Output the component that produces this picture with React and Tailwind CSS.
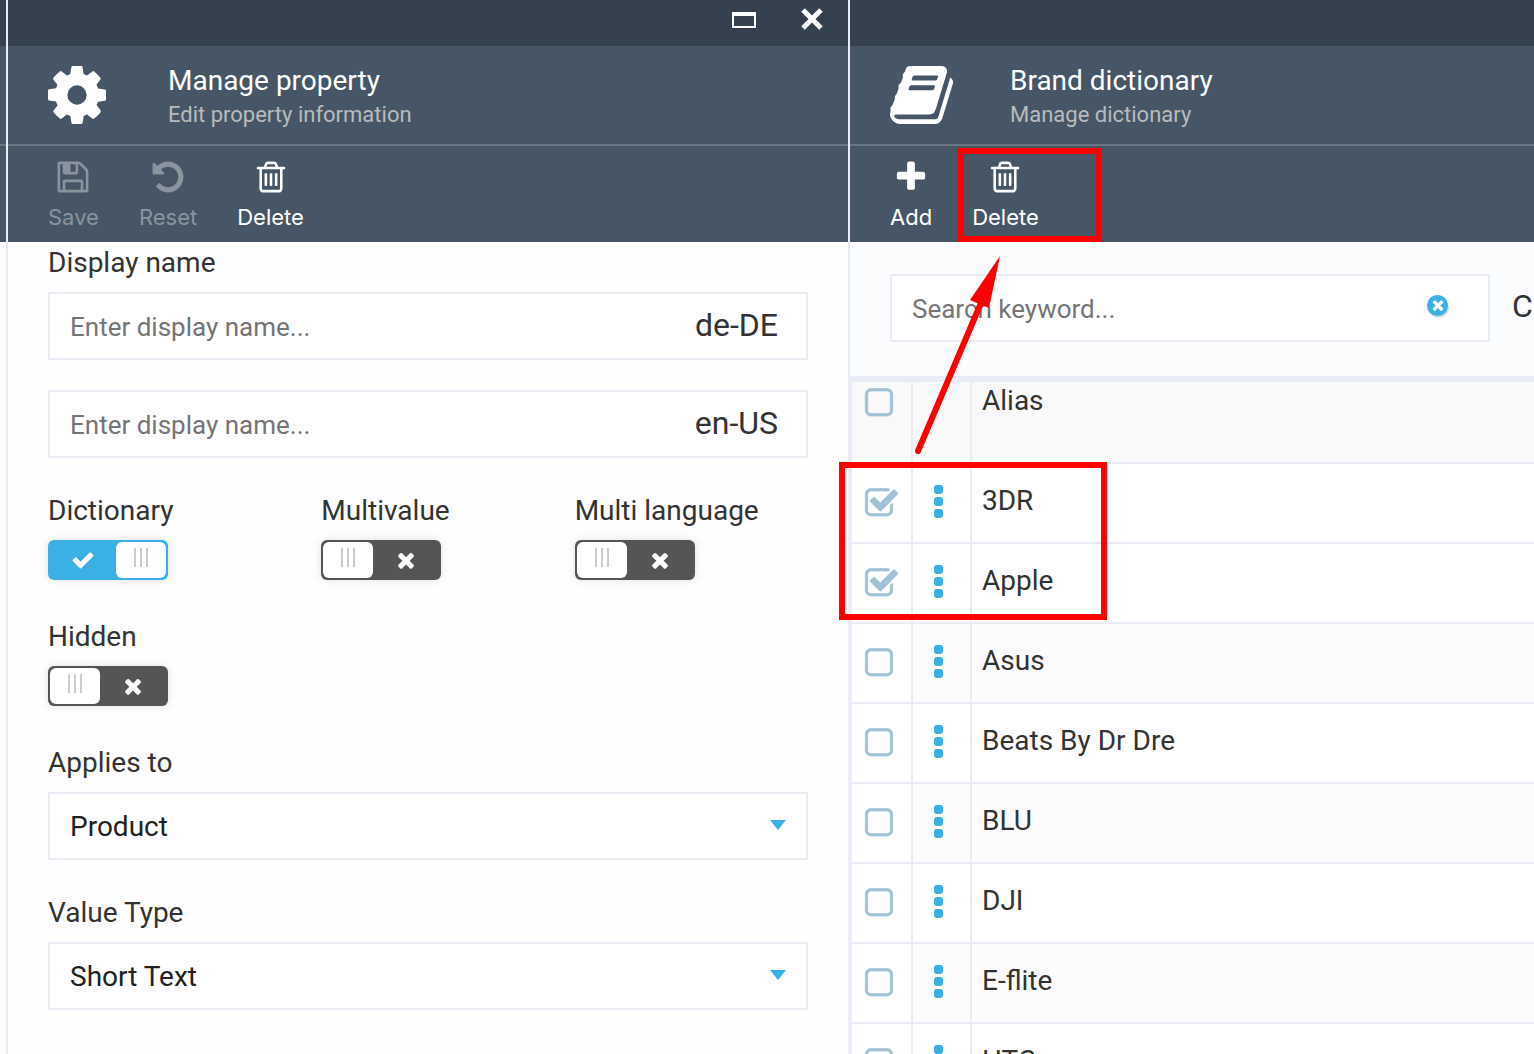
import React from "react";

const ICONS = {
  cog: {
    box: "128 0 1536 1792",
    d: "M1152 896q0-106-75-181t-181-75-181 75-75 181 75 181 181 75 181-75 75-181zm512-109v222q0 12-8 23t-20 13l-185 28q-19 54-39 91 35 50 107 138 10 12 10 25t-9 23q-27 37-99 108t-94 71q-12 0-26-9l-138-108q-44 23-91 38-16 136-29 186-7 28-36 28h-222q-14 0-24.5-8.5t-11.5-21.5l-28-184q-49-16-90-37l-141 107q-10 9-25 9-14 0-25-11-126-114-165-168-7-10-7-23 0-12 8-23 15-21 51-66.5t54-70.5q-27-50-41-99l-183-27q-13-2-21-12.5t-8-23.5v-222q0-12 8-23t19-13l186-28q14-46 39-92-40-57-107-138-10-12-10-24 0-10 9-23 26-36 98.5-107.5t94.5-71.5q13 0 26 10l138 107q44-23 91-38 16-136 29-186 7-28 36-28h222q14 0 24.5 8.5t11.5 21.5l28 184q49 16 90 37l142-107q9-9 24-9 13 0 25 10 129 119 165 170 7 8 7 22 0 12-8 23-15 21-51 66.5t-54 70.5q26 50 41 98l183 28q13 2 21 12.5t8 23.5z",
  },
  save: {
    box: "0 0 1792 1792",
    d: "M512 1536h768v-384h-768v384zm896 0h128v-896q0-14-10-38.5t-20-34.5l-281-281q-10-10-34-20t-39-10v416q0 40-28 68t-68 28h-576q-40 0-68-28t-28-68v-416h-128v1280h128v-416q0-40 28-68t68-28h832q40 0 68 28t28 68v416zm-384-928v-320q0-13-9.5-22.5t-22.5-9.5h-192q-13 0-22.5 9.5t-9.5 22.5v320q0 13 9.5 22.5t22.5 9.5h192q13 0 22.5-9.5t9.5-22.5zm640 32v928q0 40-28 68t-68 28h-1344q-40 0-68-28t-28-68v-1344q0-40 28-68t68-28h928q40 0 88 20t76 48l280 280q28 28 48 76t20 88z",
  },
  undo: {
    box: "0 0 1792 1792",
    d: "M1664 896q0 156-61 298t-164 245-245 164-298 61q-172 0-327-72.5t-264-204.5q-7-10-6.5-22.5t8.5-20.5l137-138q10-9 25-9 16 2 23 12 73 95 179 147t225 52q104 0 198.5-40.5t163.5-109.5 109.5-163.5 40.5-198.5-40.5-198.5-109.5-163.5-163.5-109.5-198.5-40.5q-98 0-188 35.5t-160 101.5l137 138q31 30 14 69-17 40-59 40h-448q-26 0-45-19t-19-45v-448q0-42 40-59 39-17 69 14l130 129q107-101 244.5-156.5t284.5-55.5q156 0 298 61t245 164 164 245 61 298z",
  },
  trash: {
    box: "0 0 1792 1792",
    d: "M704 736v576q0 14-9 23t-23 9h-64q-14 0-23-9t-9-23v-576q0-14 9-23t23-9h64q14 0 23 9t9 23zm256 0v576q0 14-9 23t-23 9h-64q-14 0-23-9t-9-23v-576q0-14 9-23t23-9h64q14 0 23 9t9 23zm256 0v576q0 14-9 23t-23 9h-64q-14 0-23-9t-9-23v-576q0-14 9-23t23-9h64q14 0 23 9t9 23zm128 724v-948h-896v948q0 22 7 40.5t14.5 27 10.5 8.5h832q3 0 10.5-8.5t14.5-27 7-40.5zm-672-1076h448l-48-117q-7-9-17-11h-317q-10 2-17 11zm928 32v64q0 14-9 23t-23 9h-96v948q0 83-47 143.5t-113 60.5h-832q-66 0-113-58.5t-47-141.5v-952h-96q-14 0-23-9t-9-23v-64q0-14 9-23t23-9h309l70-167q15-37 54-63t79-26h320q40 0 79 26t54 63l70 167h309q14 0 23 9t9 23z",
  },
  plus: {
    box: "0 0 1792 1792",
    d: "M1600 736v192q0 40-28 68t-68 28h-416v416q0 40-28 68t-68 28h-192q-40 0-68-28t-28-68v-416h-416q-40 0-68-28t-28-68v-192q0-40 28-68t68-28h416v-416q0-40 28-68t68-28h192q40 0 68 28t28 68v416h416q40 0 68 28t28 68z",
  },
  book: {
    box: "64 0 1664 1792",
    d: "M1703 478q40 57 18 129l-275 906q-19 64-76.5 107.5t-122.5 43.5h-923q-77 0-148.5-53.5t-99.5-131.5q-24-67-2-127 0-4 3-27t4-37q1-8-3-21.5t-3-19.5q2-11 8-21t16.5-23.5 16.5-23.5q23-38 45-91.5t30-91.5q3-10 .5-30t-.5-28q3-11 17-28t17-23q21-36 42-92t25-90q1-9-2.5-32t.5-28q4-13 22-30.5t22-22.5q19-26 42.5-84.5t27.5-96.5q1-8-3-25.5t-2-26.5q2-8 9-18t18-23 17-21q8-12 16.5-30.5t15-35 16-36 19.5-32 26.5-23.5 36-11.5 47.5 5.5l-1 3q38-9 51-9h761q74 0 114 56t18 130l-274 906q-36 119-71.5 153.5t-128.5 34.5h-869q-27 0-38 15-11 16-1 43 24 70 144 70h923q29 0 56-15.5t35-41.5l300-987q7-22 5-57 38 15 59 43zm-1064 2q-4 13 2 22.5t20 9.5h608q13 0 25.5-9.5t16.5-22.5l21-64q4-13-2-22.5t-20-9.5h-608q-13 0-25.5 9.5t-16.5 22.5zm-83 256q-4 13 2 22.5t20 9.5h608q13 0 25.5-9.5t16.5-22.5l21-64q4-13-2-22.5t-20-9.5h-608q-13 0-25.5 9.5t-16.5 22.5z",
  },
  checked: {
    box: "64 0 1664 1792",
    d: "M1472 930v318q0 119-84.5 203.5t-203.5 84.5h-832q-119 0-203.5-84.5t-84.5-203.5v-832q0-119 84.5-203.5t203.5-84.5h832q63 0 117 25 15 7 18 23 3 17-9 29l-49 49q-10 10-23 10-3 0-9-2-23-6-45-6h-832q-66 0-113 47t-47 113v832q0 66 47 113t113 47h832q66 0 113-47t47-113v-254q0-13 9-22l64-64q10-10 23-10 6 0 12 3 20 8 20 29zm231-489l-814 814q-24 24-57 24t-57-24l-430-430q-24-24-24-57t24-57l110-110q24-24 57-24t57 24l263 263 647-647q24-24 57-24t57 24l110 110q24 24 24 57t-24 57z",
  },
  unchecked: {
    box: "192 0 1664 1792",
    d: "M1312 256h-832q-66 0-113 47t-47 113v832q0 66 47 113t113 47h832q66 0 113-47t47-113v-832q0-66-47-113t-113-47zm288 160v832q0 119-84.5 203.5t-203.5 84.5h-832q-119 0-203.5-84.5t-84.5-203.5v-832q0-119 84.5-203.5t203.5-84.5h832q119 0 203.5 84.5t84.5 203.5z",
  },
  times: {
    box: "0 0 1792 1792",
    d: "M1490 1322q0 40-28 68l-136 136q-28 28-68 28t-68-28l-294-294-294 294q-28 28-68 28t-68-28l-136-136q-28-28-28-68t28-68l294-294-294-294q-28-28-28-68t28-68l136-136q28-28 68-28t68 28l294 294 294-294q28-28 68-28t68 28l136 136q28 28 28 68t-28 68l-294 294 294 294q28 28 28 68z",
  },
  check: {
    box: "0 0 1792 1792",
    d: "M1671 566q0 40-28 68l-724 724-136 136q-28 28-68 28t-68-28l-136-136-362-362q-28-28-28-68t28-68l136-136q28-28 68-28t68 28l294 295 656-657q28-28 68-28t68 28l136 136q28 28 28 68z",
  },
};

function Icon({ name, className }) {
  return (
    <svg viewBox={ICONS[name].box} className={className} fill="currentColor" aria-hidden="true">
      <path d={ICONS[name].d} />
    </svg>
  );
}

function ToolButton({ icon, label, disabled }) {
  return (
    <button
      type="button"
      disabled={disabled}
      className="flex flex-col items-center gap-1 font-[Inter,sans-serif] text-[22px] leading-9 text-white disabled:text-[#8a949e]"
    >
      <Icon name={icon} className="size-9" />
      <span>{label}</span>
    </button>
  );
}

function BladeHeader({ icon, iconClass, title, subtitle, windowButtons, children }) {
  return (
    <header className="bg-[#465666] text-white">
      <div className="flex h-[46px] items-start justify-end gap-11 bg-[#35414e] pt-2 pr-6">
        {windowButtons}
      </div>
      <div className="flex h-[100px] items-center border-b-2 border-[#6a7783] pl-10">
        <div className="w-[120px]">
          <Icon name={icon} className={iconClass} />
        </div>
        <div className="pt-1">
          <h1 className="text-[28px] leading-9">{title}</h1>
          <p className="text-[22px] leading-8 text-[#b9bbbd]">{subtitle}</p>
        </div>
      </div>
      <div className="flex h-24 items-start gap-10 pt-[13px] pl-10">{children}</div>
    </header>
  );
}

function NameInput({ lang }) {
  return (
    <div className="flex h-[68px] items-center border-2 border-[#e9ecf3] bg-white pt-0.5 pr-7 pl-5">
      <input
        type="text"
        aria-label={`Display name ${lang}`}
        placeholder="Enter display name..."
        className="min-w-0 flex-1 text-[26px] outline-none placeholder:text-[#757575]"
      />
      <span className="pb-1 text-[32px] leading-10">{lang}</span>
    </div>
  );
}

function Toggle({ label, defaultChecked }) {
  return (
    <label className="flex flex-col items-start gap-3 text-[28px] leading-[34px]">
      {label}
      <input type="checkbox" defaultChecked={defaultChecked} className="peer sr-only" />
      <span className="flex h-10 w-[120px] items-center rounded-md bg-[#555] p-0.5 text-white shadow-[0_0_8px_rgba(0,0,0,0.12)] peer-checked:flex-row-reverse peer-checked:bg-[#3bb0e6]">
        <span className="flex h-9 w-[50px] items-start justify-center gap-1 rounded-md bg-white pt-1.5">
          <i className="h-[19px] w-0.5 bg-[#ccc]" />
          <i className="h-[19px] w-0.5 bg-[#ccc]" />
          <i className="h-[19px] w-0.5 bg-[#ccc]" />
        </span>
        <span className="flex flex-1 justify-center">
          <Icon name={defaultChecked ? "check" : "times"} className="size-6" />
        </span>
      </span>
    </label>
  );
}

function SelectField({ id, label, value }) {
  return (
    <div className="flex flex-col gap-3">
      <label htmlFor={id} className="text-[28px] leading-[34px]">
        {label}
      </label>
      <div className="relative">
        <select
          id={id}
          className="h-[68px] w-full appearance-none border-2 border-[#e9ecf3] bg-white px-5 pt-0.5 text-[28px] text-[#222] outline-none"
        >
          <option>{value}</option>
        </select>
        <svg
          viewBox="0 0 16 10"
          className="pointer-events-none absolute top-7 right-[22px] h-2.5 w-4 fill-[#3bb0e6]"
          aria-hidden="true"
        >
          <path d="M0 0h16L8 10z" />
        </svg>
      </div>
    </div>
  );
}

function RowCheckbox({ label, defaultChecked }) {
  return (
    <label className="block text-[#a0c1d6]">
      <input type="checkbox" aria-label={label} defaultChecked={defaultChecked} className="sr-only" />
      <Icon
        name={defaultChecked ? "checked" : "unchecked"}
        className="h-[35px] w-[33px] overflow-visible stroke-current stroke-[36]"
      />
    </label>
  );
}

const ROWS = [
  { alias: "3DR", selected: true },
  { alias: "Apple", selected: true },
  { alias: "Asus" },
  { alias: "Beats By Dr Dre" },
  { alias: "BLU" },
  { alias: "DJI" },
  { alias: "E-flite" },
  { alias: "HTC" },
];

function DictionaryTable() {
  return (
    <table className="w-full border-separate border-spacing-0 border-l-2 border-[#e9ecf4] bg-white text-left text-[28px] leading-[38px]">
      <thead>
        <tr className="h-[82px] bg-[#f9f9f9] align-top">
          <th className="w-[61px] border-r-2 border-b-2 border-[#e9ecf4] pt-1 pl-[13px]">
            <RowCheckbox label="Select all" />
          </th>
          <th className="w-[59px] border-r-2 border-b-2 border-[#e9ecf4]" />
          <th className="border-b-2 border-[#e9ecf4] pl-2.5 font-normal">Alias</th>
        </tr>
      </thead>
      <tbody>
        {ROWS.map((row) => (
          <tr key={row.alias} className="h-20 align-top nth-[n+3]:odd:bg-[#fcfcfc]">
            <td className="border-r-2 border-b-2 border-[#e9ecf4] bg-white pt-[22px] pl-[13px]">
              <RowCheckbox label={`Select ${row.alias}`} defaultChecked={row.selected} />
            </td>
            <td className="border-r-2 border-b-2 border-[#e9ecf4] pt-[21px] pl-[21px]">
              <button
                type="button"
                aria-label={`Actions for ${row.alias}`}
                className="flex flex-col gap-[3px]"
              >
                <i className="size-[9px] rounded-[3px] bg-[#3bb0e6]" />
                <i className="size-[9px] rounded-[3px] bg-[#3bb0e6]" />
                <i className="size-[9px] rounded-[3px] bg-[#3bb0e6]" />
              </button>
            </td>
            <td className="border-b-2 border-[#e9ecf4] pt-[18px] pl-2.5">{row.alias}</td>
          </tr>
        ))}
      </tbody>
    </table>
  );
}

export default function App() {
  return (
    <div className="relative grid h-screen grid-cols-[8px_842fr_684fr] overflow-hidden bg-white font-[Roboto,sans-serif] text-[#333]">
      <div className="border-r-2 border-[#e9ecf3] bg-[#fbfcfe]">
        <div className="h-[46px] bg-[#35414e]" />
        <div className="h-[100px] border-b-2 border-[#6a7783] bg-[#465666]" />
        <div className="h-24 bg-[#465666]" />
      </div>

      <section className="min-w-0 border-r-2 border-[#e9ecf4] bg-[#fefefe]">
        <BladeHeader
          icon="cog"
          iconClass="h-[68px] w-[58px]"
          title="Manage property"
          subtitle="Edit property information"
          windowButtons={
            <>
              <button type="button" aria-label="Maximize" className="py-1">
                <span className="block h-4 w-6 border-2 border-t-4 border-white" />
              </button>
              <button type="button" aria-label="Close">
                <svg viewBox="0 0 24 24" className="size-6" aria-hidden="true">
                  <path d="M3 2l18 18M21 2L3 20" stroke="white" strokeWidth="5" />
                </svg>
              </button>
            </>
          }
        >
          <ToolButton icon="save" label="Save" disabled />
          <ToolButton icon="undo" label="Reset" disabled />
          <ToolButton icon="trash" label="Delete" />
        </BladeHeader>

        <form className="flex flex-col gap-9 px-10 pt-1">
          <div>
            <h2 className="mb-3 text-[28px] leading-[34px]">Display name</h2>
            <div className="flex flex-col gap-[30px]">
              <NameInput lang="de-DE" />
              <NameInput lang="en-US" />
            </div>
          </div>
          <div className="flex flex-col gap-10 pb-1">
            <div className="grid grid-cols-3">
              <Toggle label="Dictionary" defaultChecked />
              <div className="pl-5">
                <Toggle label="Multivalue" />
              </div>
              <div className="pl-5">
                <Toggle label="Multi language" />
              </div>
            </div>
            <Toggle label="Hidden" />
          </div>
          <SelectField id="applies-to" label="Applies to" value="Product" />
          <SelectField id="value-type" label="Value Type" value="Short Text" />
        </form>
      </section>

      <section className="min-w-0 bg-[#fbfcfe]">
        <BladeHeader
          icon="book"
          iconClass="h-[68px] w-[63px]"
          title="Brand dictionary"
          subtitle="Manage dictionary"
        >
          <ToolButton icon="plus" label="Add" />
          <ToolButton icon="trash" label="Delete" />
        </BladeHeader>

        <div className="flex items-center border-b-6 border-[#e9ecf4] pt-8 pb-[34px] pl-10">
          <div className="flex h-[68px] min-w-0 flex-1 items-center border-2 border-[#e9ecf4] bg-white pt-0.5 pr-10 pl-5">
            <input
              type="text"
              aria-label="Search keyword"
              placeholder="Search keyword..."
              className="min-w-0 flex-1 text-[26px] outline-none placeholder:text-[#757575]"
            />
            <button
              type="button"
              aria-label="Clear search"
              className="mb-2 flex size-[21px] items-center justify-center rounded-full bg-[#3bb0e6] text-white shadow-[1px_2px_1px_rgba(0,0,0,0.15)]"
            >
              <Icon name="times" className="size-4" />
            </button>
          </div>
          <span className="w-11 pb-1 pl-[22px] text-[32px] leading-10">C</span>
        </div>
        <DictionaryTable />
      </section>

      <div className="pointer-events-none absolute top-[148px] left-[958px] h-[94px] w-36 border-6 border-[#f00]" />
      <div className="pointer-events-none absolute top-[462px] left-[839px] h-[158px] w-[268px] border-6 border-[#f00]" />
      <svg
        viewBox="910 250 100 210"
        className="pointer-events-none absolute top-[250px] left-[910px] h-[210px] w-[100px]"
        aria-hidden="true"
      >
        <path d="M918 451L981 303" stroke="#f00" strokeWidth="6" strokeLinecap="round" />
        <path d="M1000 256L989 308L979 304L970 300Z" fill="#f00" />
      </svg>
    </div>
  );
}
